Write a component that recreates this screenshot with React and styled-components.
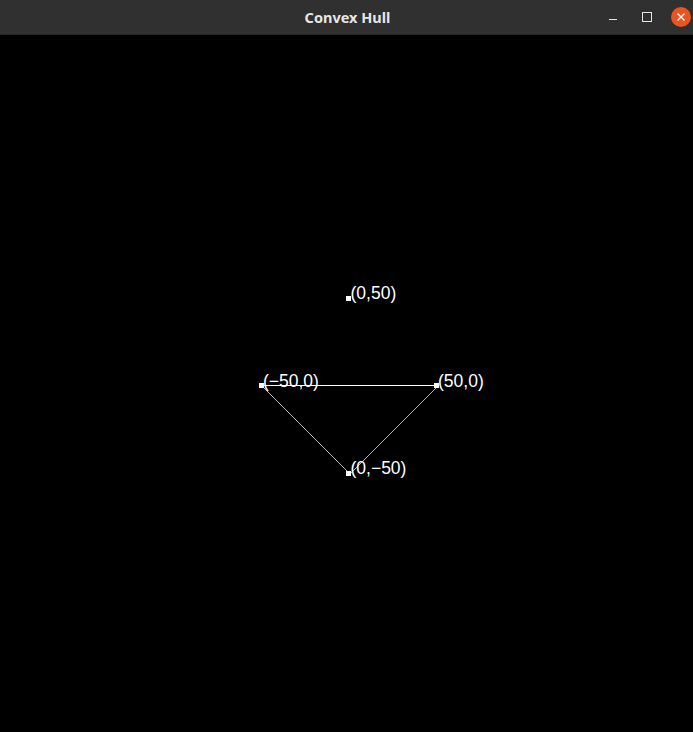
import styled, { createGlobalStyle } from "styled-components"

const GlobalStyle = createGlobalStyle`
  html, body {
    margin: 0;
    padding: 0;
    background: #000;
  }
  #root {
    height: 100vh;
  }
`

const Window = styled.div`
  display: flex;
  flex-direction: column;
  width: 693px;
  height: 732px;
  background: #000;
  overflow: hidden;
`

const TitleBar = styled.div`
  position: relative;
  display: flex;
  align-items: center;
  justify-content: center;
  height: 35px;
  flex-shrink: 0;
  background: #303030;
  border-bottom: 1px solid #262626;
  box-sizing: border-box;
`

const Title = styled.span`
  font-family: "Noto Sans", "Open Sans", sans-serif;
  font-weight: 700;
  font-size: 14.5px;
  color: #e6e6e6;
  margin-left: 2px;
`

const Controls = styled.div`
  position: absolute;
  right: -5px;
  top: 0;
  height: 100%;
  display: flex;
  align-items: center;
`

const ControlButton = styled.div`
  width: 34px;
  height: 34px;
  display: flex;
  align-items: center;
  justify-content: center;
`

const CloseCircle = styled.div`
  width: 20px;
  height: 20px;
  border-radius: 50%;
  background: #e95420;
  display: flex;
  align-items: center;
  justify-content: center;
`

const Canvas = styled.div`
  flex: 1;
  position: relative;
`

const Plot = styled.svg`
  display: block;
  width: 100%;
  height: 100%;
`

const Label = styled.text`
  font-family: "Liberation Sans", Arial, sans-serif;
  font-size: 17.5px;
  fill: #fff;
`

const CX = 349.5
const CY = 350.5
const SCALE = 1.75

const points = [
  { x: 0, y: 50, label: "(0,50)" },
  { x: -50, y: 0, label: "(\u221250,0)" },
  { x: 50, y: 0, label: "(50,0)" },
  { x: 0, y: -50, label: "(0,\u221250)" },
]

const hull = [
  [-50, 0],
  [50, 0],
  [0, -50],
]

const toScreen = (x, y) => [CX + x * SCALE, CY - y * SCALE]

const App = () => {
  const edges = hull.map((a, i) => {
    const b = hull[(i + 1) % hull.length]
    const [x1, y1] = toScreen(a[0], a[1])
    const [x2, y2] = toScreen(b[0], b[1])
    return { x1, y1, x2, y2, flat: y1 === y2 }
  })

  return (
    <>
      <GlobalStyle />
      <Window>
        <TitleBar>
          <Title>Convex Hull</Title>
          <Controls>
            <ControlButton>
              <svg width="10" height="10" viewBox="0 0 10 10">
                <rect x="1" y="7" width="8" height="1" fill="#e6e6e6" />
              </svg>
            </ControlButton>
            <ControlButton>
              <svg width="10" height="10" viewBox="0 0 10 10">
                <rect x="0.5" y="0.5" width="9" height="9" fill="none" stroke="#e6e6e6" strokeWidth="1" />
              </svg>
            </ControlButton>
            <ControlButton>
              <CloseCircle>
                <svg width="10" height="10" viewBox="0 0 10 10">
                  <path d="M1.5 1.5 L8.5 8.5 M8.5 1.5 L1.5 8.5" stroke="#fff" strokeWidth="1.3" />
                </svg>
              </CloseCircle>
            </ControlButton>
          </Controls>
        </TitleBar>
        <Canvas>
          <Plot viewBox="0 0 693 697">
            {edges.map((e, i) => (
              <line
                key={i}
                x1={e.x1}
                y1={e.y1}
                x2={e.x2}
                y2={e.y2}
                stroke="#fff"
                strokeWidth={e.flat ? 1 : 0.7}
                shapeRendering="crispEdges"
              />
            ))}
            {points.map((p) => {
              const [sx, sy] = toScreen(p.x, p.y)
              return (
                <g key={p.label}>
                  <rect
                    x={Math.floor(sx) - 3}
                    y={Math.floor(sy) - 2}
                    width="5"
                    height="5"
                    fill="#fff"
                    shapeRendering="crispEdges"
                  />
                  <Label x={sx + 1} y={sy + 1}>
                    {p.label}
                  </Label>
                </g>
              )
            })}
          </Plot>
        </Canvas>
      </Window>
    </>
  )
}

export default App
